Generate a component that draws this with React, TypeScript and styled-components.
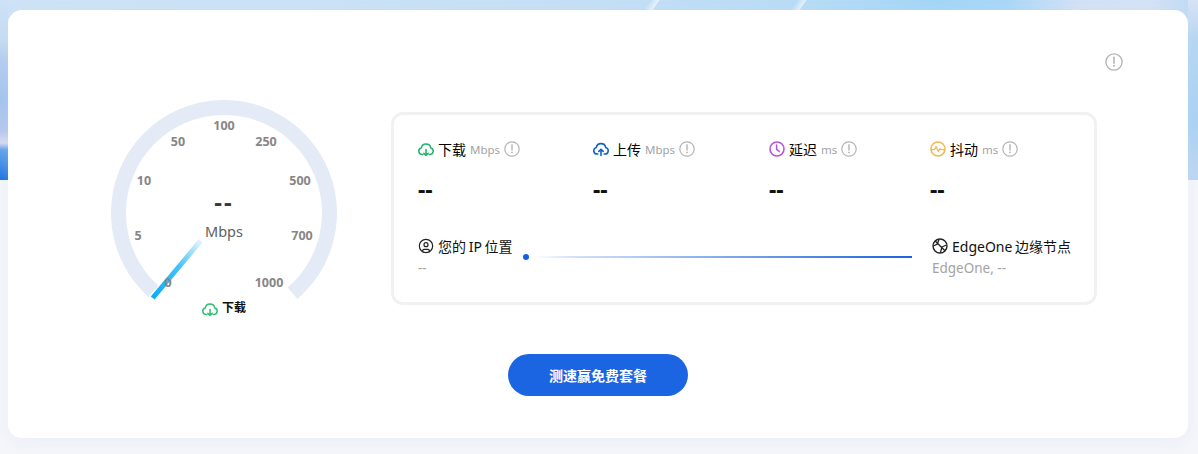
import React from 'react';
import styled, { createGlobalStyle } from 'styled-components';
import { CircleUser } from 'lucide-react';

const FONT = `"Noto Sans", "Noto Sans CJK SC", sans-serif`;

const GlobalStyle = createGlobalStyle`
    html, body {
        margin: 0;
        padding: 0;
        height: 100%;
        overflow: hidden;
    }
    body {
        font-family: ${FONT};
        background-color: #f4f6fa;
        background-image: linear-gradient(90deg, #cfe2f7 0, #cbe2f6 25%, #c4dff5 50%, #b8dcf6 67%, #a3d6f7 78%, #a9d7f7 84%, #d3e1f6 90%, #d5e2f6 96%, #bcdaf5 100%);
        background-size: 100% 180px;
        background-repeat: no-repeat;
    }
`;

const Edge = styled.div<{ $side: 'left' | 'right' }>`
    position: absolute;
    top: 0;
    height: 180px;
    ${p => (p.$side === 'left' ? 'left: 0; width: 8px;' : 'right: 0; width: 10px;')}
    background: ${p =>
        p.$side === 'left'
            ? 'linear-gradient(180deg, #cfe2f7 0, #c5dcf3 40px, #b4ccf0 60px, #a3c3ee 100px, #b4c6ef 130px, #d6daf4 143px, #5ea0ea 150px, #3f8ae6 165px, #1a6fe0 180px)'
            : 'linear-gradient(180deg, #d8e2f6 0, #b5d7f3 40px, #a9d2f3 120px, #bcd6f4 180px)'};
`;

const Streak = styled.div<{ $left: number }>`
    position: absolute;
    top: 0;
    left: ${p => p.$left}px;
    width: 9px;
    height: 10px;
    transform: skewX(-35deg);
    background: linear-gradient(90deg, rgba(255, 255, 255, 0), rgba(255, 255, 255, 0.65));
`;

const Card = styled.main`
    position: relative;
    box-sizing: border-box;
    width: 1180px;
    height: 428px;
    margin: 10px 0 0 8px;
    padding: 43px 65px 0 103px;
    background: #fff;
    border-radius: 14px;
    box-shadow: 0 4px 16px rgba(210, 220, 235, 0.25);
`;

const TopRow = styled.div`
    display: flex;
    justify-content: flex-end;
    height: 20px;
`;

const MainRow = styled.div`
    display: flex;
    align-items: flex-start;
    margin-top: 27px;
`;

const GaugeBox = styled.div`
    width: 280px;
    height: 238px;
    flex: none;

    svg {
        display: block;
    }
`;

const Panel = styled.section`
    box-sizing: border-box;
    width: 706px;
    height: 193px;
    margin-top: 12px;
    padding: 24px 0 0 24px;
    border: 3px solid #f0f1f3;
    border-radius: 12px;
`;

const Metrics = styled.div`
    display: flex;
`;

const Metric = styled.div<{ $width: number }>`
    width: ${p => p.$width}px;
    flex: none;
`;

const MetricHead = styled.div`
    display: flex;
    align-items: center;
    height: 20px;
    font-size: 14px;
    color: #000;
`;

const MetricIcon = styled.svg`
    width: 16px;
    height: 16px;
    margin-right: 4px;
    flex: none;
`;

const Unit = styled.span`
    margin: 0 4px;
    font-size: 11.5px;
    color: #a3a3a3;
`;

const MetricValue = styled.div`
    margin-top: 15px;
    height: 30px;
    font-size: 23px;
    line-height: 30px;
    font-weight: 700;
    color: #111;
`;

const RouteRow = styled.div`
    display: flex;
    margin-top: 32px;
`;

const Place = styled.div<{ $width: number }>`
    width: ${p => p.$width}px;
    flex: none;
`;

const PlaceName = styled.div`
    display: flex;
    align-items: center;
    gap: 4px;
    height: 20px;
    font-size: 14px;
    word-spacing: -1px;
    color: #111;
    white-space: nowrap;
`;

const PlaceValue = styled.div`
    margin-top: 3px;
    font-size: 13.5px;
    line-height: 18px;
    color: #a3a3a3;
`;

const Track = styled.div`
    position: relative;
    width: 389px;
    height: 2px;
    flex: none;
    margin: 20px 20px 0 0;
    background: linear-gradient(90deg, #fff 0, #fff 3%, #d5e3f9 12%, #1a62dd 100%);
`;

const Dot = styled.span`
    position: absolute;
    left: 0;
    top: -2px;
    width: 6px;
    height: 6px;
    border-radius: 50%;
    background: #0f5fe8;
`;

const Footer = styled.div`
    display: flex;
    justify-content: center;
    margin-top: 16px;
    margin-right: 38px;
`;

const StartButton = styled.button`
    width: 180px;
    height: 42px;
    border: none;
    border-radius: 21px;
    background: #1c65e2;
    color: #fff;
    font-family: ${FONT};
    font-size: 14px;
    font-weight: 700;
`;

const InfoIcon = ({ size = 16 }: { size?: number }) => (
    <svg width={size} height={size} viewBox="0 0 16 16" fill="none" style={{ flex: 'none' }}>
        <circle cx="8" cy="8" r="7.2" stroke="#b4b4b4" strokeWidth="1.2" />
        <path d="M8 3.8v5.2" stroke="#b4b4b4" strokeWidth="1.4" strokeLinecap="round" />
        <circle cx="8" cy="11.4" r="0.9" fill="#b4b4b4" />
    </svg>
);

const CloudDown = ({ color }: { color: string }) => (
    <MetricIcon viewBox="0 0 16 16" fill="none">
        <path
            d="M4.8 13.4H4a3.3 3.3 0 0 1-.7-6.5 4.8 4.8 0 0 1 9.4 0 3.3 3.3 0 0 1-.7 6.5h-.8"
            stroke={color}
            strokeWidth="1.5"
            strokeLinecap="round"
            strokeLinejoin="round"
        />
        <path d="M8 8.4v6M5.8 12.2 8 14.4l2.2-2.2" stroke={color} strokeWidth="1.5" strokeLinecap="round" strokeLinejoin="round" />
    </MetricIcon>
);

const CloudUp = ({ color }: { color: string }) => (
    <MetricIcon viewBox="0 0 16 16" fill="none">
        <path
            d="M4.8 13H4a3.3 3.3 0 0 1-.7-6.5 4.8 4.8 0 0 1 9.4 0 3.3 3.3 0 0 1-.7 6.5h-.8"
            stroke={color}
            strokeWidth="1.6"
            strokeLinecap="round"
            strokeLinejoin="round"
        />
        <path d="M8 14.4V8.2M5.8 10.4 8 8.2l2.2 2.2" stroke={color} strokeWidth="1.6" strokeLinecap="round" strokeLinejoin="round" />
    </MetricIcon>
);

const Clock = ({ color }: { color: string }) => (
    <MetricIcon viewBox="0 0 16 16" fill="none">
        <circle cx="8" cy="8" r="7" stroke={color} strokeWidth="1.6" />
        <path d="M7.6 4v4.4l2.6 2" stroke={color} strokeWidth="1.5" strokeLinecap="round" strokeLinejoin="round" />
    </MetricIcon>
);

const Jitter = ({ color }: { color: string }) => (
    <MetricIcon viewBox="0 0 16 16" fill="none">
        <circle cx="8" cy="8" r="7" stroke={color} strokeWidth="1.6" />
        <path d="M1.5 8.6h3l1.6-3 2.2 5 1.6-3 1 1h3.6" stroke={color} strokeWidth="1.3" strokeLinecap="round" strokeLinejoin="round" />
    </MetricIcon>
);

const Globe = () => (
    <svg width="16" height="16" viewBox="0 0 16 16" fill="none" style={{ flex: 'none' }}>
        <circle cx="8" cy="8" r="7" stroke="#222" strokeWidth="1.4" />
        <path d="M3.2 3 13 12.8M7 1.4 5.2 6.2 1.4 8M14.4 7 10 9l-1.6 5.6" stroke="#222" strokeWidth="1.3" strokeLinejoin="round" />
    </svg>
);

// gauge center is 113,113 in the svg, labels are [text, x, baseline]
const TICKS: [string, number, number][] = [
    ['5', 27, 139.5],
    ['10', 33, 84.5],
    ['50', 67, 45.5],
    ['100', 113, 29.5],
    ['250', 155, 45.5],
    ['500', 189, 84.5],
    ['700', 191, 139.5],
    ['1000', 158, 186.5],
    ['0', 57, 186.5],
];

const Gauge = () => (
    <svg width="280" height="238" viewBox="0 0 280 238" fill="none">
        <defs>
            <linearGradient id="needle" x1="41.7" y1="198" x2="89.7" y2="140.7" gradientUnits="userSpaceOnUse">
                <stop offset="0" stopColor="#08aef8" />
                <stop offset="0.55" stopColor="#45c2f9" />
                <stop offset="1" stopColor="#e4f5fe" />
            </linearGradient>
        </defs>
        <path d="M42.4 191.4 A105.5 105.5 0 1 1 181.5 193.2" stroke="#e5eaf7" strokeWidth="15" />
        <path d="M41.7 198 89.7 140.7" stroke="url(#needle)" strokeWidth="5" />
        {TICKS.map(([label, x, y]) => (
            <text
                key={label}
                x={x}
                y={y}
                textAnchor="middle"
                fontFamily={FONT}
                fontSize="12.5"
                fontWeight="700"
                fill="#868686"
            >
                {label}
            </text>
        ))}
        <text x="113" y="111" textAnchor="middle" fontFamily={FONT} fontSize="24" fontWeight="700" fill="#3a3a3a" letterSpacing="2">
            --
        </text>
        <text x="113" y="137" textAnchor="middle" fontFamily={FONT} fontSize="14.5" fill="#5f5f5f">
            Mbps
        </text>
        <g transform="translate(91 201)">
            <path
                d="M4.8 13.4H4a3.3 3.3 0 0 1-.7-6.5 4.8 4.8 0 0 1 9.4 0 3.3 3.3 0 0 1-.7 6.5h-.8"
                stroke="#2fbf74"
                strokeWidth="1.5"
                strokeLinecap="round"
                strokeLinejoin="round"
            />
            <path d="M8 8.4v6M5.8 12.2 8 14.4l2.2-2.2" stroke="#2fbf74" strokeWidth="1.5" strokeLinecap="round" strokeLinejoin="round" />
        </g>
        <text x="111" y="212" fontFamily={FONT} fontSize="12" fontWeight="700" fill="#111">
            下载
        </text>
    </svg>
);

const METRICS = [
    { title: '下载', unit: 'Mbps', width: 175, icon: <CloudDown color="#1fb46a" /> },
    { title: '上传', unit: 'Mbps', width: 176, icon: <CloudUp color="#1262c9" /> },
    { title: '延迟', unit: 'ms', width: 161, icon: <Clock color="#b455dc" /> },
    { title: '抖动', unit: 'ms', width: 140, icon: <Jitter color="#eebb55" /> },
];

const App: React.FC = () => {
    return (
        <>
            <GlobalStyle />
            <Edge $side="left" />
            <Edge $side="right" />
            <Streak $left={647} />
            <Streak $left={794} />
            <Card>
                <TopRow>
                    <InfoIcon size={18} />
                </TopRow>
                <MainRow>
                    <GaugeBox>
                        <Gauge />
                    </GaugeBox>
                    <Panel>
                        <Metrics>
                            {METRICS.map(m => (
                                <Metric key={m.title} $width={m.width}>
                                    <MetricHead>
                                        {m.icon}
                                        {m.title}
                                        <Unit>{m.unit}</Unit>
                                        <InfoIcon />
                                    </MetricHead>
                                    <MetricValue>--</MetricValue>
                                </Metric>
                            ))}
                        </Metrics>
                        <RouteRow>
                            <Place $width={105}>
                                <PlaceName>
                                    <CircleUser size={16} color="#222" strokeWidth={1.8} />
                                    您的 IP 位置
                                </PlaceName>
                                <PlaceValue>--</PlaceValue>
                            </Place>
                            <Track>
                                <Dot />
                            </Track>
                            <Place $width={150}>
                                <PlaceName>
                                    <Globe />
                                    EdgeOne 边缘节点
                                </PlaceName>
                                <PlaceValue>EdgeOne, --</PlaceValue>
                            </Place>
                        </RouteRow>
                    </Panel>
                </MainRow>
                <Footer>
                    <StartButton>测速赢免费套餐</StartButton>
                </Footer>
            </Card>
        </>
    );
};

export default App;
